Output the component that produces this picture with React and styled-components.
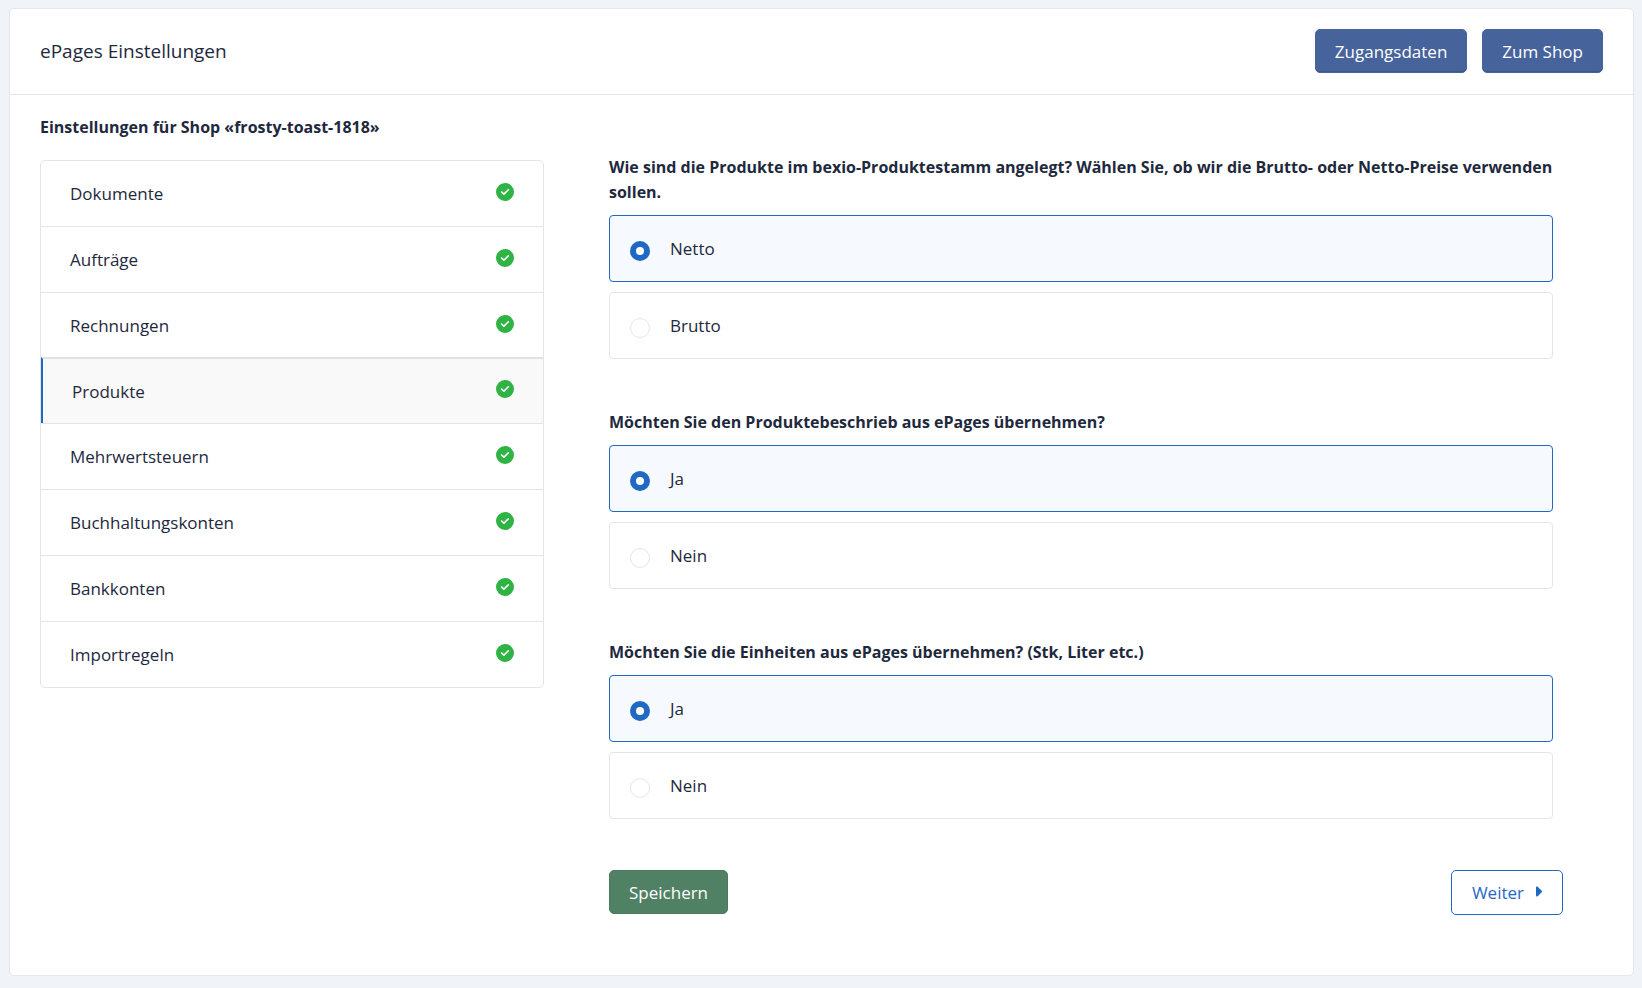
import React, { useState } from "react";
import styled, { createGlobalStyle } from "styled-components";
import { FaCaretRight, FaCircleCheck } from "react-icons/fa6";

const GlobalStyle = createGlobalStyle`
  * {
    box-sizing: border-box;
  }

  body {
    margin: 0;
    background: #f0f4f9;
    color: #1e293d;
    font-family: "Segoe UI", "Open Sans", "Noto Sans", sans-serif;
    font-size: 17px;
    line-height: 25px;
  }
`;

const Card = styled.main`
  margin: 8px 8px 12px 9px;
  background: #fff;
  border: 1px solid #e5e7ea;
  border-radius: 5px;
`;

const Header = styled.header`
  display: flex;
  align-items: center;
  justify-content: space-between;
  padding: 20px 30px 21px;
  border-bottom: 1px solid #e5e5e5;
`;

const Title = styled.h1`
  margin: 0;
  font-size: 19px;
  font-weight: 400;
`;

const HeaderButtons = styled.div`
  display: flex;
  gap: 15px;
`;

const Button = styled.button`
  height: 44px;
  padding: 0 20px;
  border: 1px solid ${(props) => props.$border};
  border-radius: 5px;
  background: ${(props) => props.$background};
  color: ${(props) => props.$color || "#fff"};
  font: inherit;
  cursor: pointer;
`;

const BlueButton = styled(Button).attrs({
  $background: "#47639b",
  $border: "#47639b",
})`
  padding: 0 19px;
  box-shadow: inset 0 -1px 0 #3c5689;
`;

const SaveButton = styled(Button).attrs({
  $background: "#518165",
  $border: "#4b7a5f",
})`
  padding: 0 19px;
`;

const NextButton = styled(Button).attrs({
  $background: "#fff",
  $border: "#1f69c4",
  $color: "#1f69c4",
})`
  display: flex;
  align-items: center;
  gap: 10px;
  height: 45px;

  svg {
    width: 8px;
    height: 21px;
    margin-bottom: 2px;
  }
`;

const Content = styled.div`
  padding: 20px 70px 60px 30px;
`;

const ShopTitle = styled.h2`
  margin: 0;
  font-size: 16px;
  font-weight: 700;
`;

const Columns = styled.div`
  display: grid;
  grid-template-columns: 504fr 954fr;
  gap: 65px;
  align-items: start;
  padding-top: 15px;
`;

const NavList = styled.ul`
  margin: 5px 0 0;
  padding: 0;
  list-style: none;
  border: 1px solid #e5e5e5;
  border-radius: 5px;
`;

const NavItem = styled.li`
  border-bottom: 1px solid #e5e5e5;

  &:last-child {
    border-bottom: none;
  }
`;

const NavLink = styled.a`
  display: flex;
  align-items: center;
  justify-content: space-between;
  height: 65px;
  padding: 0 29px;
  color: inherit;
  text-decoration: none;

  svg {
    color: #2fb344;
    margin-bottom: 4px;
  }

  &[aria-current] {
    height: 66px;
    margin-top: -2px;
    border-top: 2px solid #e1e1e1;
    border-left: 2px solid #1f69c4;
    background: #f9f9f9;
  }
`;

const Question = styled.fieldset`
  margin: 0 10px 51px 0;
  padding: 0;
  border: none;
  min-width: 0;
`;

const Legend = styled.legend`
  margin: 0 -10px 10px 0;
  padding: 0;
  font-size: 16px;
  font-weight: 700;
`;

const Option = styled.label`
  display: flex;
  align-items: center;
  gap: 20px;
  height: 67px;
  padding: 0 20px;
  border: 1px solid #e5e5e5;
  border-radius: 4px;
  cursor: pointer;

  & + & {
    margin-top: 10px;
  }

  &:has(input:checked) {
    border-color: #1f69c4;
    background: #f6f9fe;
  }
`;

const Radio = styled.input`
  appearance: none;
  width: 20px;
  height: 20px;
  margin: 5px 0 0;
  border: 1px solid #e5e5e5;
  border-radius: 50%;
  background: #fff;

  &:checked {
    border: 6px solid #1f69c4;
  }
`;

const Actions = styled.div`
  display: flex;
  align-items: flex-start;
  justify-content: space-between;
`;

const navItems = [
  "Dokumente",
  "Aufträge",
  "Rechnungen",
  "Produkte",
  "Mehrwertsteuern",
  "Buchhaltungskonten",
  "Bankkonten",
  "Importregeln",
];

const questions = [
  {
    name: "preise",
    text: "Wie sind die Produkte im bexio-Produktestamm angelegt? Wählen Sie, ob wir die Brutto- oder Netto-Preise verwenden sollen.",
    options: ["Netto", "Brutto"],
  },
  {
    name: "beschrieb",
    text: "Möchten Sie den Produktebeschrieb aus ePages übernehmen?",
    options: ["Ja", "Nein"],
  },
  {
    name: "einheiten",
    text: "Möchten Sie die Einheiten aus ePages übernehmen? (Stk, Liter etc.)",
    options: ["Ja", "Nein"],
  },
];

function RadioQuestion({ name, text, options }) {
  const [value, setValue] = useState(options[0]);

  return (
    <Question>
      <Legend>{text}</Legend>
      {options.map((option) => (
        <Option key={option}>
          <Radio
            type="radio"
            name={name}
            value={option}
            checked={value === option}
            onChange={() => setValue(option)}
          />
          <span>{option}</span>
        </Option>
      ))}
    </Question>
  );
}

function App() {
  const [active, setActive] = useState("Produkte");

  return (
    <>
      <GlobalStyle />
      <Card>
        <Header>
          <Title>ePages Einstellungen</Title>
          <HeaderButtons>
            <BlueButton type="button">Zugangsdaten</BlueButton>
            <BlueButton type="button">Zum Shop</BlueButton>
          </HeaderButtons>
        </Header>
        <Content>
          <ShopTitle>Einstellungen für Shop «frosty-toast-1818»</ShopTitle>
          <Columns>
            <nav>
              <NavList>
                {navItems.map((item) => (
                  <NavItem key={item}>
                    <NavLink
                      href="#"
                      aria-current={item === active ? "page" : undefined}
                      onClick={() => setActive(item)}
                    >
                      {item}
                      <FaCircleCheck size={18} />
                    </NavLink>
                  </NavItem>
                ))}
              </NavList>
            </nav>
            <form onSubmit={(e) => e.preventDefault()}>
              {questions.map((question) => (
                <RadioQuestion key={question.name} {...question} />
              ))}
              <Actions>
                <SaveButton type="submit">Speichern</SaveButton>
                <NextButton type="button">
                  Weiter
                  <FaCaretRight />
                </NextButton>
              </Actions>
            </form>
          </Columns>
        </Content>
      </Card>
    </>
  );
}

export default App;
